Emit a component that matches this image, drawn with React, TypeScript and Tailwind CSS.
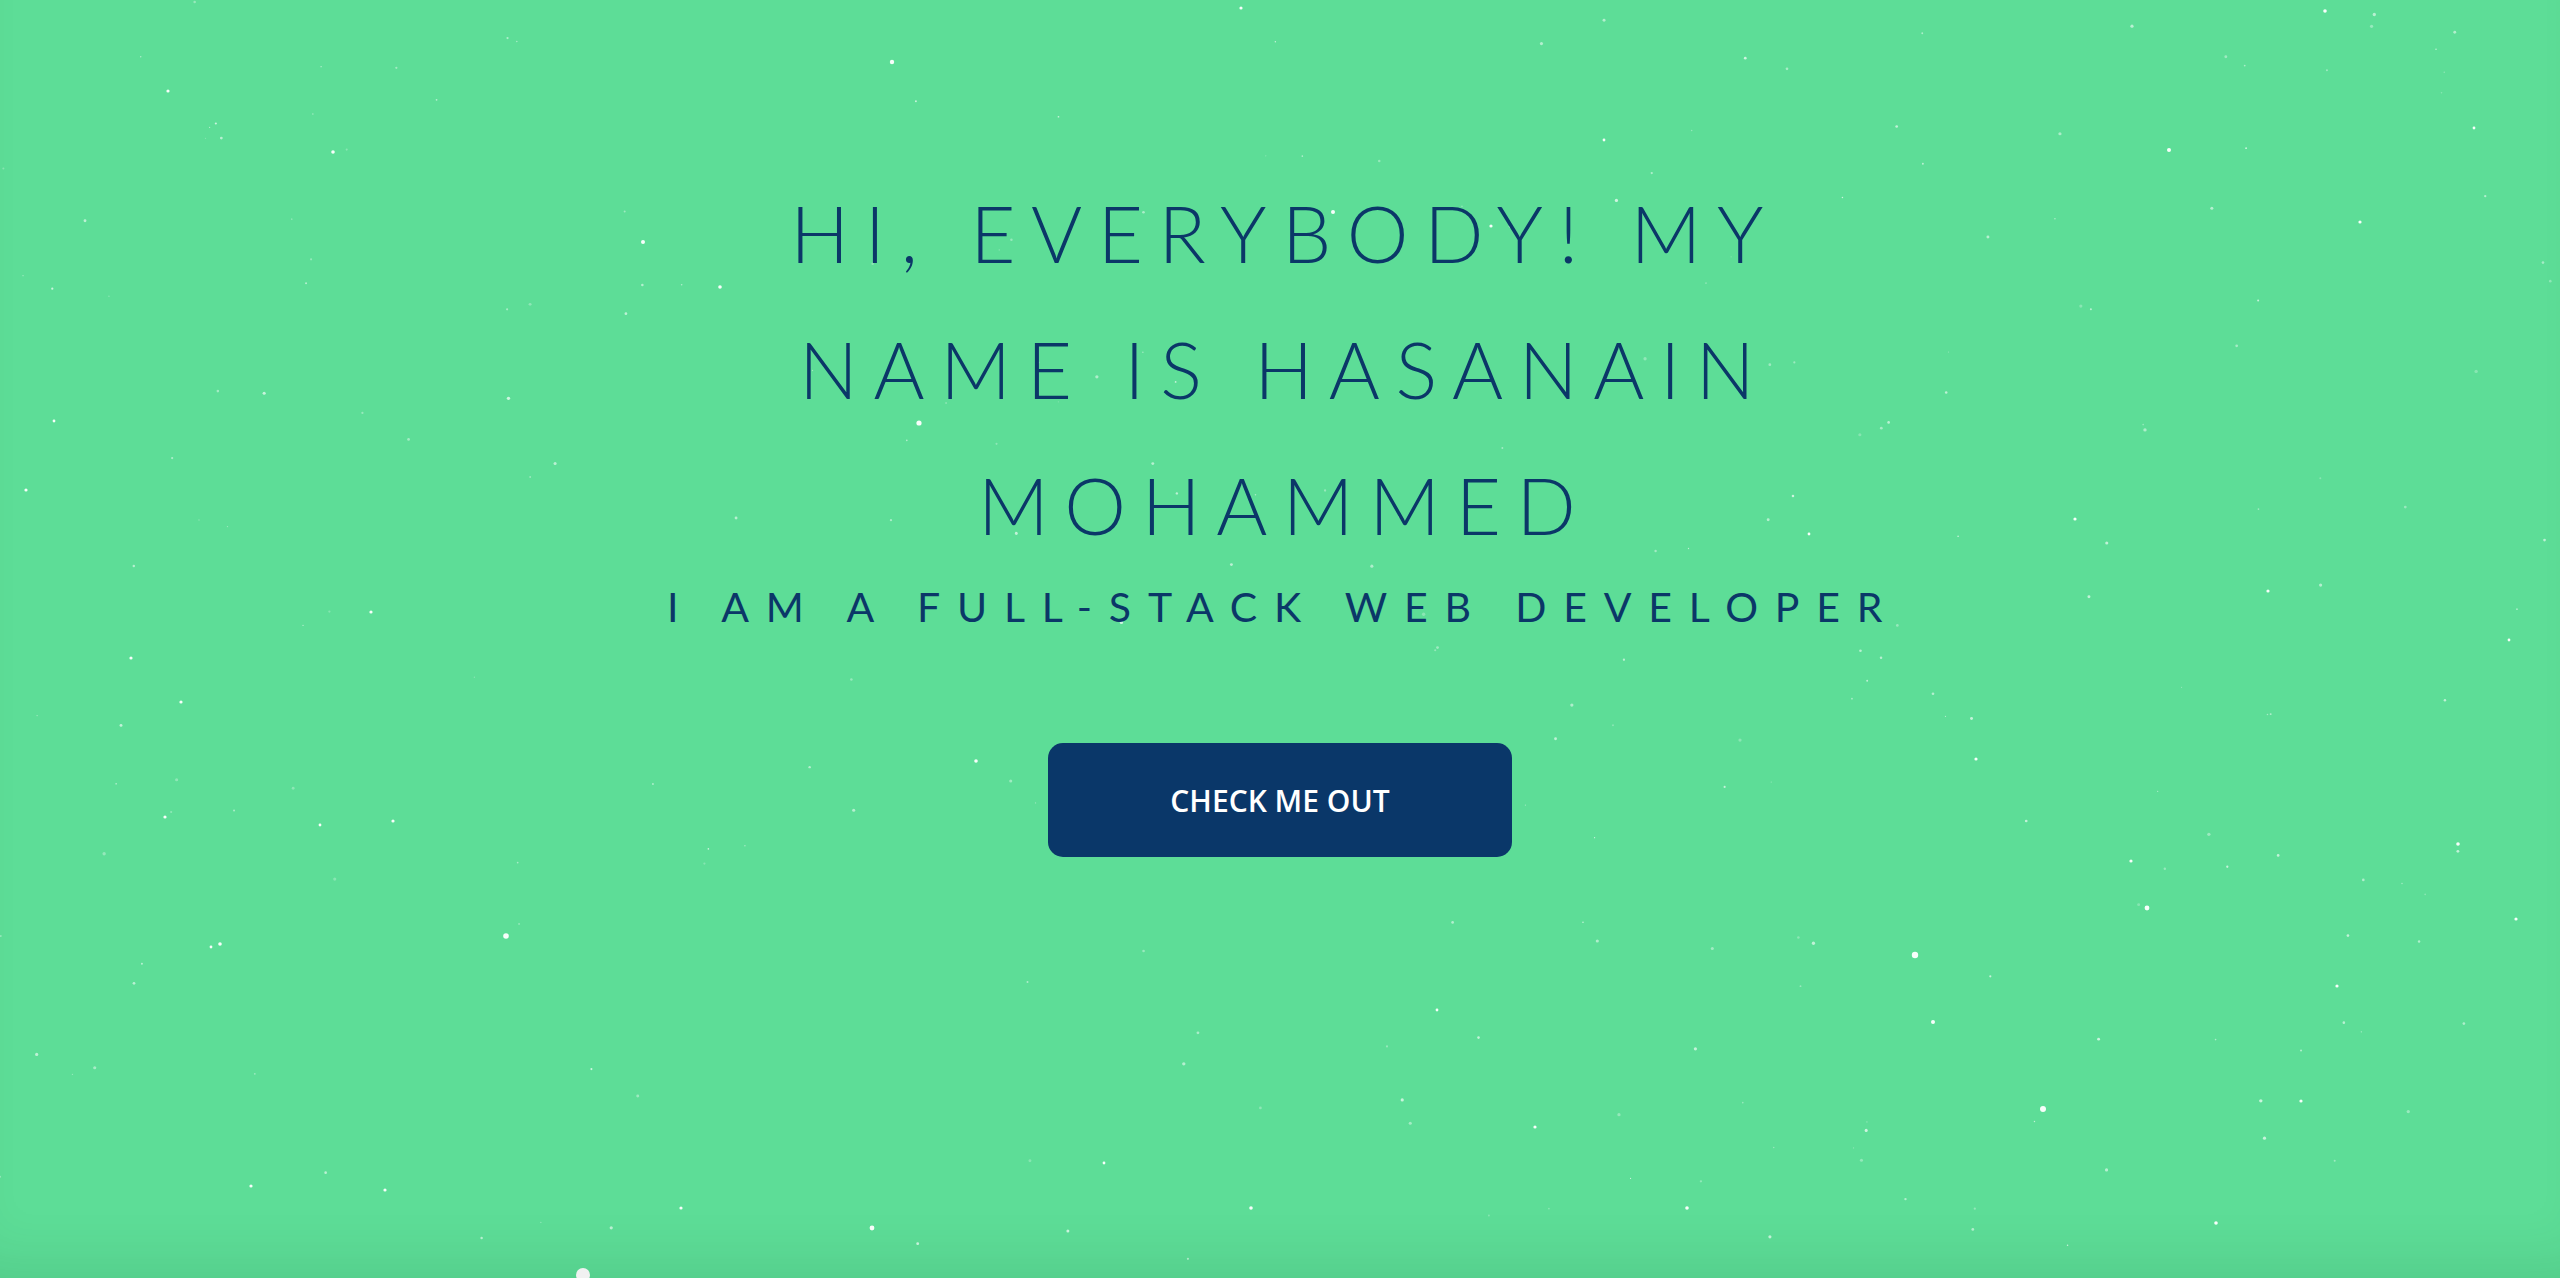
import React from "react";

type Star = { x: number; y: number; r: number; o: number };

// the bright ones picked off the screenshot, the rest are filled in below
const brightStars: Star[] = [
  [892, 62, 2.2], [168, 91, 1.6], [333, 152, 1.8], [643, 242, 2], [919, 423, 2.6],
  [506, 936, 2.8], [1915, 955, 3.2], [2043, 1109, 3], [2147, 908, 2.4], [2169, 150, 2],
  [1333, 212, 2], [872, 1228, 2.4], [1933, 1022, 2], [720, 287, 1.8], [131, 658, 1.6],
  [181, 702, 1.6], [26, 490, 1.6], [976, 761, 1.8], [1241, 8, 1.6], [2325, 11, 1.8],
  [2360, 222, 1.6], [2458, 844, 1.8], [2516, 919, 1.6], [2216, 1223, 1.8], [2337, 986, 1.6],
  [2301, 1101, 1.6], [2268, 591, 1.6], [2075, 519, 1.6], [1976, 759, 1.6], [2131, 861, 1.6],
  [1687, 1208, 1.8], [1535, 1127, 1.6], [1251, 1208, 1.8], [681, 1208, 1.6], [385, 1190, 1.6],
  [251, 1186, 1.6], [220, 944, 1.8], [211, 947, 1.4], [393, 821, 1.6], [320, 825, 1.4],
  [165, 817, 1.6], [371, 612, 1.6], [54, 421, 1.4], [1491, 226, 1.6], [1604, 140, 1.4],
  [2474, 128, 1.4], [2509, 640, 1.4], [1809, 534, 1.4], [1437, 1010, 1.4], [1104, 1163, 1.4],
].map(([x, y, r]) => ({ x, y, r, o: 0.95 }));

function makeFaint(): Star[] {
  let seed = 7;
  const rand = () => {
    seed = (seed * 16807) % 2147483647;
    return (seed - 1) / 2147483646;
  };
  const out: Star[] = [];
  for (let i = 0; i < 260; i++) {
    out.push({ x: rand() * 2560, y: rand() * 1278, r: 0.6 + rand() * 1.1, o: 0.25 + rand() * 0.45 });
  }
  return out;
}

const stars = [...makeFaint(), ...brightStars];

const StarField = () => (
  <svg
    className="absolute inset-0 h-full w-full pointer-events-none"
    viewBox="0 0 2560 1278"
    preserveAspectRatio="none"
  >
    {stars.map((s, i) => (
      <circle key={i} cx={s.x} cy={s.y} r={s.r} fill="#ffffff" fillOpacity={s.o} />
    ))}
    <circle cx={583} cy={1275} r={7} fill="#f1f1f1" />
  </svg>
);

export default function App() {
  return (
    <div className="relative h-[1278px] w-full overflow-hidden bg-[#5ddd97] shadow-[inset_0_-50px_60px_-40px_rgba(0,60,30,0.12)]">
      <StarField />

      <div className="relative flex flex-col items-center pt-[165px] text-[#0b3768]">
        <h1
          className="pl-[0.12em] text-center text-[78px] font-light leading-[136px] tracking-[0.2em]"
          style={{ fontFamily: "Lato, 'Open Sans', sans-serif" }}
        >
          <span className="block">HI, EVERYBODY! MY</span>
          <span className="block">NAME IS HASANAIN</span>
          <span className="block">MOHAMMED</span>
        </h1>

        <p
          className="mt-[10px] pl-[0.15em] text-center text-[41px] font-normal leading-[48px] tracking-[0.41em]"
          style={{ fontFamily: "Lato, 'Open Sans', sans-serif" }}
        >
          I AM A FULL-STACK WEB DEVELOPER
        </p>

        <button
          className="mt-[112px] flex h-[114px] w-[464px] items-center justify-center rounded-[15px] bg-[#0a3769] text-[30px] font-semibold text-white"
          style={{ fontFamily: "'Open Sans', 'Noto Sans', sans-serif" }}
        >
          CHECK ME OUT
        </button>
      </div>
    </div>
  );
}
